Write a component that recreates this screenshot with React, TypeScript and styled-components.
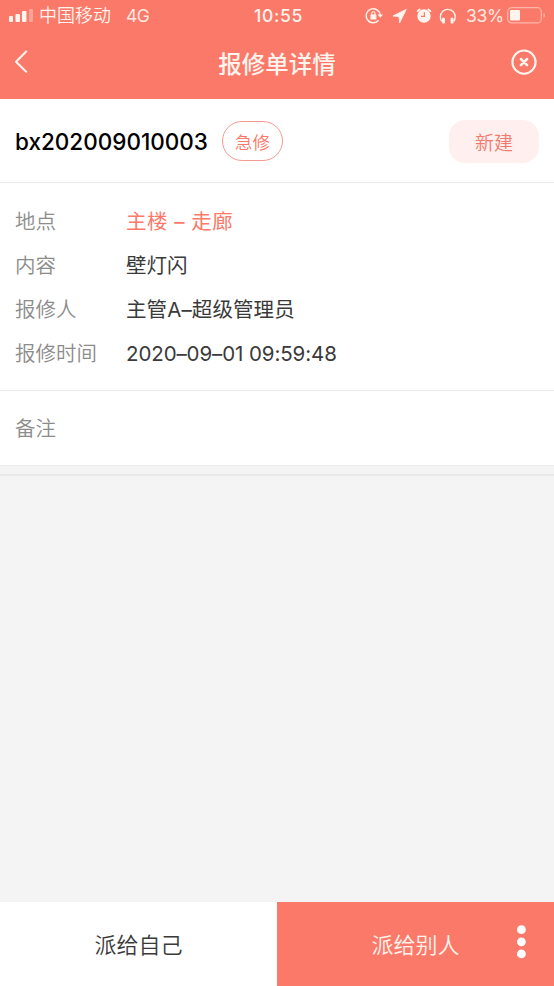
import React from "react";
import styled, { createGlobalStyle } from "styled-components";

const coral = "#fb7969";
const line = "#ebebeb";

const GlobalStyle = createGlobalStyle`
  * { box-sizing: border-box; }
  body {
    margin: 0;
    background: #f4f4f4;
    font-family: Inter, "Noto Sans CJK SC", sans-serif;
  }
  button { font: inherit; border: 0; padding: 0; background: none; color: inherit; }
  svg { display: block; flex: none; }
`;

const Screen = styled.div`
  display: flex;
  flex-direction: column;
  width: 554px;
  height: 986px;
  overflow: hidden;
  background: #f4f4f4;
`;

const Header = styled.header`
  flex: none;
  height: 99px;
  background: ${coral};
  color: #fff4ee;
`;

const StatusBar = styled.div`
  display: grid;
  grid-template-columns: 1fr auto 1fr;
  align-items: center;
  height: 31px;
  padding: 0 8px 0 9px;
  line-height: 30px;
  font-size: 18px;
`;

const StatusGroup = styled.div<{ $end?: boolean }>`
  display: flex;
  align-items: center;
  justify-content: ${(p) => (p.$end ? "flex-end" : "flex-start")};
`;

const Carrier = styled.span`
  margin-left: 6px;
  font-weight: 350;
`;

const Network = styled.span`
  margin-left: 15px;
  font-size: 17.5px;
  font-weight: 400;
  letter-spacing: -0.5px;
  opacity: 0.9;
`;

const Clock = styled.span`
  margin-left: 2px;
  font-size: 17.5px;
  font-weight: 500;
  letter-spacing: 0.7px;
`;

const Icons = styled.div`
  display: flex;
  align-items: center;
`;

const Percent = styled.span`
  width: 37px;
  margin: 0 4px 0 9px;
  font-size: 17.5px;
  font-weight: 400;
  letter-spacing: -0.3px;
  opacity: 0.9;
`;

const NavBar = styled.nav`
  display: grid;
  grid-template-columns: 60px 1fr 60px;
  align-items: center;
  height: 62px;
`;

const NavButton = styled.button<{ $end?: boolean }>`
  display: flex;
  justify-content: ${(p) => (p.$end ? "flex-end" : "flex-start")};
  padding: ${(p) => (p.$end ? "0 16px 0 0" : "0 0 0 13px")};
`;

const Title = styled.h1`
  margin: 5px 0 0;
  text-align: center;
  font-size: 23.5px;
  line-height: 34px;
  font-weight: 500;
`;

const OrderHead = styled.section`
  flex: none;
  display: flex;
  align-items: center;
  height: 84px;
  padding: 1px 15px 0;
  background: #fff;
  border-bottom: 1px solid ${line};
`;

const OrderNo = styled.h2`
  width: 192px;
  margin: 0;
  font-size: 22.5px;
  font-weight: 500;
  color: #000;
  white-space: nowrap;
`;

const UrgentTag = styled.span`
  display: flex;
  align-items: center;
  justify-content: center;
  width: 61px;
  height: 40px;
  margin-left: 15px;
  border: 1px solid #f49a91;
  border-radius: 20px;
  font-size: 17.5px;
  font-weight: 350;
  color: ${coral};
`;

const StateTag = styled.span`
  display: flex;
  align-items: center;
  justify-content: center;
  width: 90px;
  height: 43px;
  margin-left: auto;
  border-radius: 16px;
  background: #fff0ef;
  font-size: 19px;
  font-weight: 350;
  color: #f07a6d;
`;

const Details = styled.dl<{ $height: number }>`
  flex: none;
  display: flex;
  flex-direction: column;
  justify-content: center;
  height: ${(p) => p.$height}px;
  margin: 0;
  padding: 3px 15px 0;
  background: #fff;
  border-bottom: 1px solid ${line};
`;

const Row = styled.div`
  display: flex;
  align-items: center;
  height: 44.3px;
  font-size: 20.5px;
  line-height: 30px;
`;

const Label = styled.dt`
  width: 111px;
  color: #8c8c8c;
  font-weight: 350;
`;

const Value = styled.dd<{ $accent?: boolean; $tracking?: number }>`
  margin: 0;
  color: ${(p) => (p.$accent ? coral : "#3a3a3a")};
  font-weight: 400;
  letter-spacing: ${(p) => p.$tracking ?? 0}px;
  white-space: pre;
`;

const Divider = styled.div`
  flex: none;
  height: 10px;
  background: #f4f4f4;
  border-bottom: 2px solid #e9e9e9;
`;

const Filler = styled.main`
  flex: 1;
`;

const Footer = styled.footer`
  flex: none;
  display: grid;
  grid-template-columns: 1fr 1fr;
  height: 84px;
`;

const Action = styled.button<{ $primary?: boolean }>`
  position: relative;
  display: flex;
  align-items: center;
  justify-content: center;
  padding-bottom: 3px;
  background: ${(p) => (p.$primary ? coral : "#fff")};
  color: ${(p) => (p.$primary ? "#fff4ee" : "#3a3a3a")};
  font-size: 22px;
  font-weight: 350;
`;

const More = styled.span`
  position: absolute;
  right: 28px;
  top: 23px;
`;

const Signal = () => (
  <svg width="24" height="14" viewBox="0 0 24 14" fill="#fff4ee">
    <rect x="0" y="7" width="4" height="6" rx="1" />
    <rect x="6.5" y="5" width="4.5" height="8" rx="1" />
    <rect x="13" y="2" width="4.5" height="11" rx="1" />
    <rect x="20" y="0" width="4" height="13" rx="1" opacity=".35" />
  </svg>
);

const StatusIcons = () => (
  <svg width="92" height="18" viewBox="0 0 92 18" fill="none" stroke="#fff4ee">
    <path d="M13.6 13.2A7 7 0 1 1 15.2 8.2" strokeWidth="1.4" />
    <path d="M12.6 7.4H18L15.3 10.8Z" fill="#fff4ee" stroke="none" />
    <rect x="5.4" y="7.6" width="6" height="4.8" rx=".5" fill="#fff4ee" stroke="none" />
    <path d="M6.8 8V6.4a1.6 1.6 0 0 1 3.2 0V8" strokeWidth="1.1" />
    <path d="M41.2 2.4L28 9l6.2.8.4 6.1Z" fill="#fff4ee" stroke="#fff4ee" strokeWidth=".9" strokeLinejoin="round" />
    <circle cx="59" cy="9" r="6.7" fill="#fff4ee" stroke="none" />
    <path d="M52.6 4.1l2-1.7M65.4 4.1l-2-1.7" strokeWidth="1.9" strokeLinecap="round" />
    <path d="M59.4 5.2v4.2h-3.4" stroke={coral} strokeWidth="1.2" />
    <path d="M76.7 14.3c-1-1.2-1.3-2.8-1.3-4.6a7.4 7.4 0 0 1 14.8 0c0 1.8-.3 3.4-1.3 4.6" strokeWidth="1.3" />
    <rect x="77" y="10.8" width="3" height="5.6" rx="1" fill="#fff4ee" stroke="none" />
    <rect x="85.6" y="10.8" width="3" height="5.6" rx="1" fill="#fff4ee" stroke="none" />
  </svg>
);

const Battery = () => (
  <svg width="39" height="17" viewBox="0 0 39 17">
    <rect x=".7" y=".7" width="33.6" height="15.2" rx="4" fill="none" stroke="#fff4ee" strokeOpacity=".5" strokeWidth="1.2" />
    <rect x="3" y="3" width="10" height="10.6" rx="1" fill="#fff4ee" />
    <path d="M36.5 5.5c2 1.2 2 4.4 0 5.6Z" fill="#fff4ee" opacity=".5" />
  </svg>
);

const Back = () => (
  <svg width="16" height="24" viewBox="0 0 16 24" fill="none" stroke="#fff4ee" strokeWidth="2.1" strokeLinecap="round" strokeLinejoin="round">
    <path d="M13.2 1.5L3 11.7l10.2 10" />
  </svg>
);

const Close = () => (
  <svg width="27" height="27" viewBox="0 0 27 27" fill="none" stroke="#fff4ee">
    <circle cx="13" cy="13.1" r="11.6" strokeWidth="2.1" />
    <path d="M9.9 10l6.2 6.2M16.1 10l-6.2 6.2" strokeWidth="2.5" strokeLinecap="round" />
  </svg>
);

const Dots = () => (
  <svg width="10" height="36" viewBox="0 0 10 36" fill="#fff">
    <circle cx="5.4" cy="4.7" r="4.4" />
    <circle cx="5.4" cy="16.8" r="4.4" />
    <circle cx="5.4" cy="28.9" r="4.4" />
  </svg>
);

export default function App() {
  return (
    <>
      <GlobalStyle />
      <Screen>
        <Header>
          <StatusBar>
            <StatusGroup>
              <Signal />
              <Carrier>中国移动</Carrier>
              <Network>4G</Network>
            </StatusGroup>
            <Clock>10:55</Clock>
            <StatusGroup $end>
              <Icons>
                <StatusIcons />
                <Percent>33%</Percent>
                <Battery />
              </Icons>
            </StatusGroup>
          </StatusBar>
          <NavBar>
            <NavButton aria-label="返回"><Back /></NavButton>
            <Title>报修单详情</Title>
            <NavButton $end aria-label="关闭"><Close /></NavButton>
          </NavBar>
        </Header>
        <OrderHead>
          <OrderNo>bx202009010003</OrderNo>
          <UrgentTag>急修</UrgentTag>
          <StateTag>新建</StateTag>
        </OrderHead>
        <Details $height={208}>
          <Row><Label>地点</Label><Value $accent $tracking={0.5}>主楼 – 走廊</Value></Row>
          <Row><Label>内容</Label><Value>壁灯闪</Value></Row>
          <Row><Label>报修人</Label><Value $tracking={0.1}>主管A–超级管理员</Value></Row>
          <Row><Label>报修时间</Label><Value $tracking={-0.1}>2020–09–01 09:59:48</Value></Row>
        </Details>
        <Details $height={75}>
          <Row><Label>备注</Label></Row>
        </Details>
        <Divider />
        <Filler />
        <Footer>
          <Action>派给自己</Action>
          <Action $primary>
            派给别人
            <More><Dots /></More>
          </Action>
        </Footer>
      </Screen>
    </>
  );
}
